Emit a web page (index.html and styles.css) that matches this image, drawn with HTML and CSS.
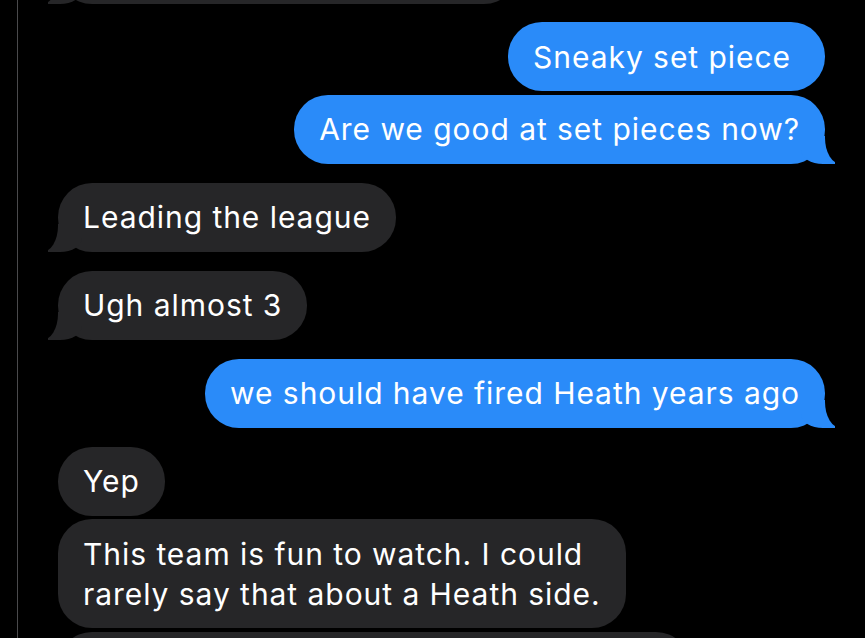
FILE: index.html
```html
<!DOCTYPE html>
<html lang="en">
<head>
<meta charset="utf-8">
<title>Messages</title>
<link rel="stylesheet" href="styles.css">
</head>
<body>
<div class="screen">
  <div class="sidebar"></div>
  <main class="chat">
    <div class="row in first">
      <div class="bubble in tail top-cut" aria-hidden="true"></div>
    </div>
    <div class="row out lead">
      <div class="bubble out extra-right">Sneaky set piece</div>
    </div>
    <div class="row out close">
      <div class="bubble out tail">Are we good at set pieces now?</div>
    </div>
    <div class="row in group">
      <div class="bubble in tail">Leading the league</div>
    </div>
    <div class="row in group">
      <div class="bubble in tail">Ugh almost 3</div>
    </div>
    <div class="row out group">
      <div class="bubble out tail">we should have fired Heath years ago</div>
    </div>
    <div class="row in group">
      <div class="bubble in">Yep</div>
    </div>
    <div class="row in close">
      <div class="bubble in">This team is fun to watch. I could<br>rarely say that about a Heath side.</div>
    </div>
    <div class="row in close">
      <div class="bubble in bottom-cut" aria-hidden="true"></div>
    </div>
  </main>
</div>
</body>
</html>
```
FILE: styles.css
```css
html, body {
  margin: 0;
  padding: 0;
  background: #000;
  height: 638px;
  overflow: hidden;
}

.screen {
  display: flex;
  height: 638px;
  background: #000;
}

.sidebar {
  width: 17px;
  flex: none;
  border-right: 1px solid #4a4a4c;
}

.chat {
  flex: 1;
  display: flex;
  flex-direction: column;
  padding: 0 40px 0 40px;
  font-family: "Inter", "Liberation Sans", sans-serif;
  font-size: 30px;
  color: #fff;
}

.row {
  display: flex;
  flex: none;
}

.row.in { justify-content: flex-start; }
.row.out { justify-content: flex-end; }

.row.first { margin-top: -65px; }
.row.lead { margin-top: 18px; }
.row.group { margin-top: 19px; }
.row.close { margin-top: 3.5px; }

.bubble {
  position: relative;
  padding: 14.5px 25px;
  line-height: 40px;
  border-radius: 34px;
  letter-spacing: 0.95px;
  white-space: nowrap;
}

.bubble.in { background: #262628; }
.bubble.out { background: #2a8bf9; }

.bubble.extra-right { padding-right: 34px; }

.top-cut { width: 410px; height: 40px; }
.bottom-cut { width: 582px; height: 80px; }

/* tails */
.bubble.tail::before,
.bubble.tail::after {
  content: "";
  position: absolute;
  bottom: 0;
}

.bubble.out.tail::before {
  right: -10px;
  width: 34px;
  height: 28px;
  background: #2a8bf9;
  border-bottom-left-radius: 22px 14px;
  z-index: 0;
}

.bubble.out.tail::after {
  right: -18px;
  width: 18px;
  height: 30px;
  background: #000;
  border-bottom-left-radius: 16px 26px;
  z-index: 1;
}

.bubble.in.tail::before {
  left: -10px;
  width: 34px;
  height: 28px;
  background: #262628;
  border-bottom-right-radius: 22px 14px;
  z-index: 0;
}

.bubble.in.tail::after {
  left: -18px;
  width: 18px;
  height: 30px;
  background: #000;
  border-bottom-right-radius: 16px 26px;
  z-index: 1;
}
```
